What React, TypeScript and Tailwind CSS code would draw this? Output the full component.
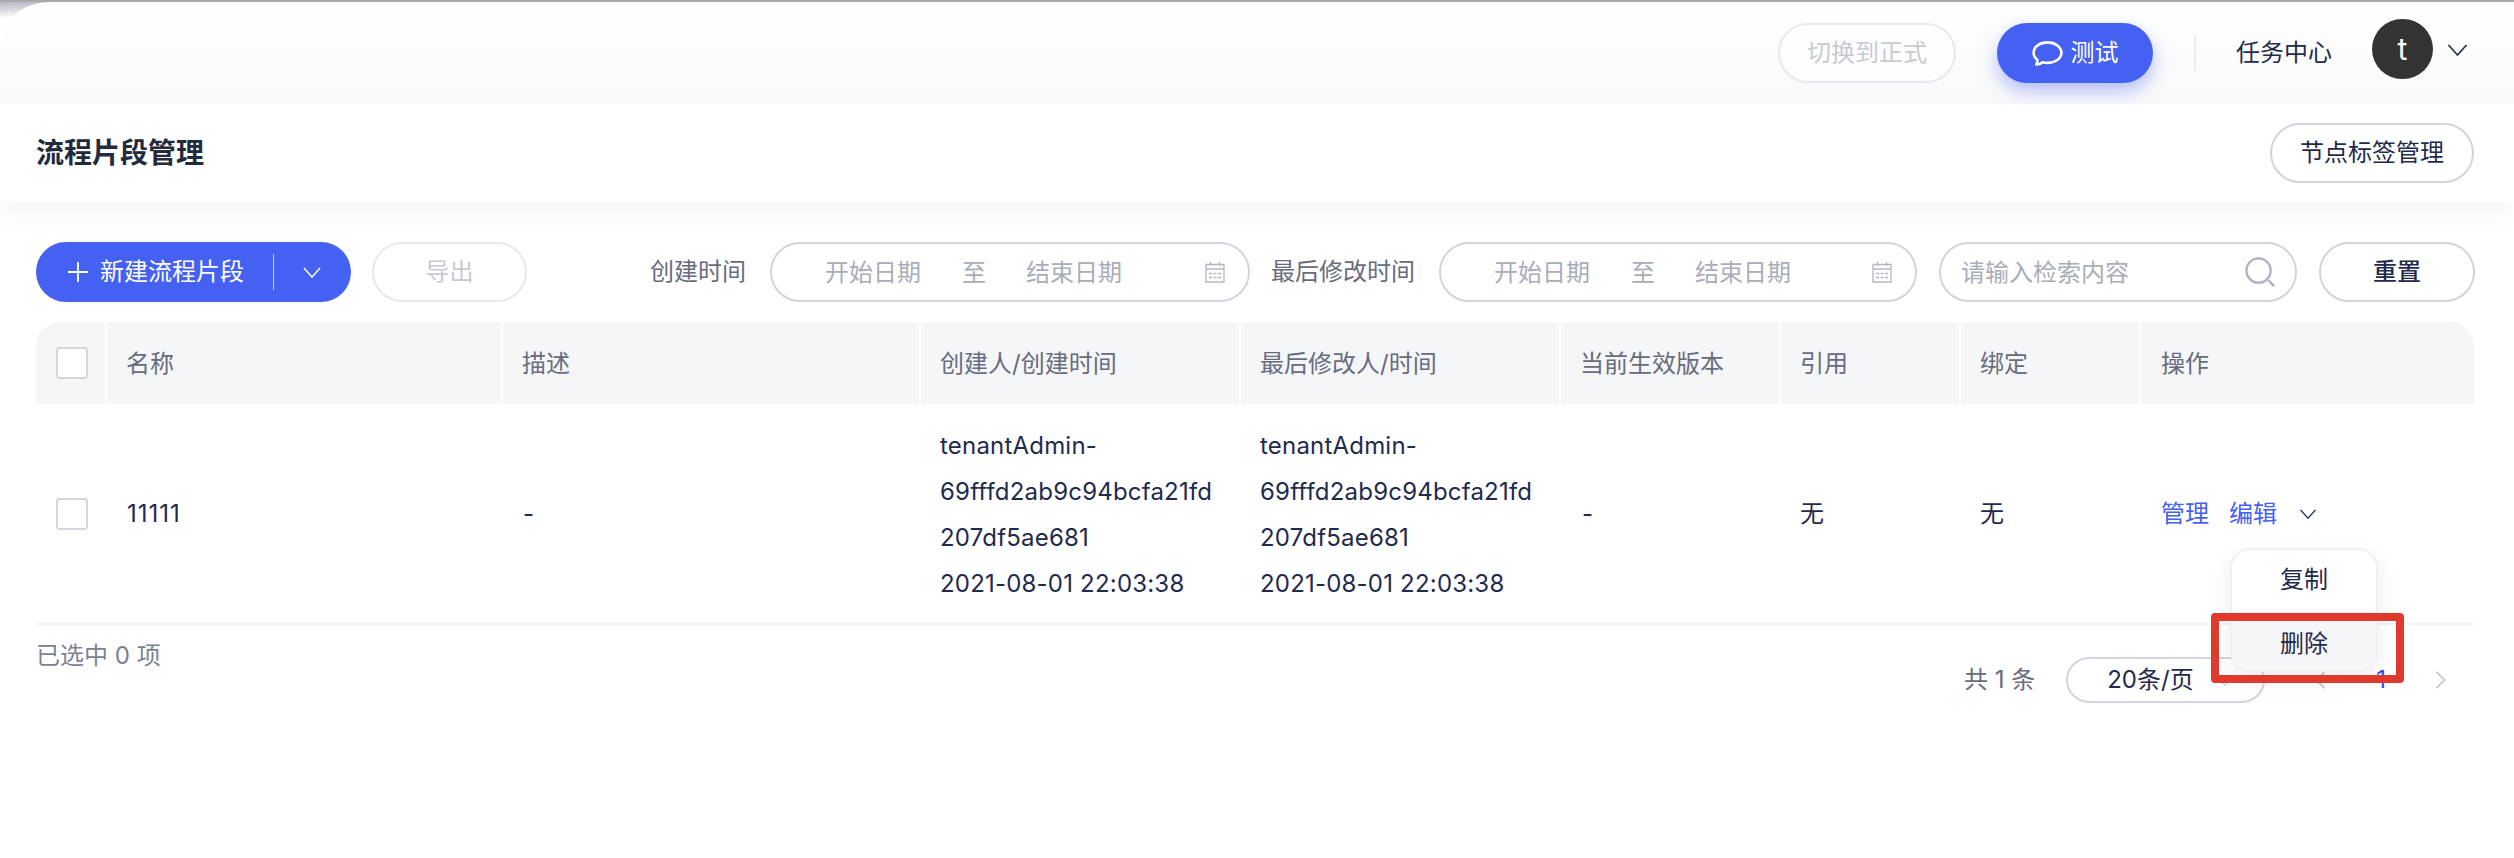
import React from 'react';

const font = 'font-["Inter","Noto_Sans_CJK_SC",sans-serif]';

function Chevron({ className }: { className?: string }) {
  return (
    <svg viewBox="0 0 20 12" fill="none" stroke="currentColor" strokeWidth="1.6" className={className}>
      <path d="M1 1l9 10 9-10" />
    </svg>
  );
}

function CalendarIcon() {
  return (
    <svg viewBox="0 0 20 22" fill="none" stroke="#b4b7c3" strokeWidth="1.3" className="ml-auto w-[20px] h-[22px] shrink-0">
      <path d="M1 3.5h18v17.5H1zM1 8h18M5.5 1v4M14.5 1v4" />
      <path d="M4 12.5h3M8.5 12.5h3M13 12.5h3M4 16.5h3M8.5 16.5h3M13 16.5h3" />
    </svg>
  );
}

function DateRange({ className }: { className: string }) {
  return (
    <div className={`${className} h-[60px] flex items-center shrink-0 rounded-full border-2 border-[#d3d4dc] pl-[53px] pr-[23px] text-[#a9adba]`}>
      <span className="pt-[2px]">开始日期</span>
      <span className="ml-[41px] pt-[2px]">至</span>
      <span className="ml-[40px] pt-[2px]">结束日期</span>
      <CalendarIcon />
    </div>
  );
}

const columns = [
  { title: '', className: 'w-[69px] pl-[20px]' },
  { title: '名称', className: 'w-[396px] pl-[19px] pt-[2px] border-l-2' },
  { title: '描述', className: 'w-[418px] pl-[19px] pt-[2px] border-l-2' },
  { title: '创建人/创建时间', className: 'w-[320px] pl-[19px] pt-[2px] border-l-2' },
  { title: '最后修改人/时间', className: 'w-[320px] pl-[19px] pt-[2px] border-l-2' },
  { title: '当前生效版本', className: 'w-[220px] pl-[19px] pt-[2px] border-l-2' },
  { title: '引用', className: 'w-[180px] pl-[19px] pt-[2px] border-l-2' },
  { title: '绑定', className: 'w-[180px] pl-[19px] pt-[2px] border-l-2' },
  { title: '操作', className: 'flex-1 pl-[20px] pt-[2px] border-l-2' },
];

function PersonCell({ className }: { className: string }) {
  return (
    <div className={`${className} pl-[21px] pt-[2px] leading-[46px] tracking-[0.2px]`}>
      <div>tenantAdmin-</div>
      <div>69fffd2ab9c94bcfa21fd</div>
      <div>207df5ae681</div>
      <div>2021-08-01 22:03:38</div>
    </div>
  );
}

function Checkbox() {
  return <div className="w-[32px] h-[32px] rounded-[4px] border-2 border-[#d5d6dd] bg-white" />;
}

export default function App() {
  return (
    <div className={`${font} min-h-[858px] bg-white text-[24px] text-[#1f2a4d]`}>
      {/* top bar */}
      <div className="h-[2px] bg-[#a9a9a9]" />
      <div className="bg-gradient-to-br from-[#b4b7c2] via-white via-[8%] to-white">
        <div className="h-[102px] rounded-tl-[50px_44px] bg-gradient-to-b from-white to-[#f9f9fa] flex items-center pr-[46px] justify-end">
          <button className="w-[178px] h-[60px] rounded-full border-2 border-[#e8e9ee] bg-white/60 text-[#c8cad3]">切换到正式</button>
          <button className="ml-[41px] w-[156px] h-[60px] rounded-full bg-[#4461f2] text-white flex items-center justify-center gap-[8px] shadow-[0_8px_18px_rgba(68,97,242,0.4)]">
            <svg viewBox="0 0 31 25" fill="none" stroke="currentColor" strokeWidth="2.6" strokeLinejoin="round" className="w-[31px] h-[25px]">
              <path d="M15.5 1.4C7.7 1.4 1.6 5.8 1.6 11.8c0 3 1.5 5.4 3.9 7.2.2 1.5-.5 3.1-1.2 4.5 2.4 0 4.6-.8 6.2-2.2 1.5.4 3.2.6 5 .6 7.8 0 13.9-4.3 13.9-10.1S23.3 1.4 15.5 1.4z" />
            </svg>
            测试
          </button>
          <div className="ml-[41px] w-[2px] h-[36px] bg-[#ebecf0]" />
          <span className="ml-[40px]">任务中心</span>
          <div className="ml-[40px] w-[61px] h-[60px] -mt-[8px] rounded-full bg-[#333333] text-white flex items-center justify-center text-[30px]">t</div>
          <Chevron className="ml-[14px] w-[21px] h-[12px] -mt-[6px]" />
        </div>
      </div>

      {/* title */}
      <div className="relative h-[98px] bg-white flex items-center justify-between pl-[36px] pr-[40px] shadow-[0_14px_24px_rgba(30,35,60,0.035)]">
        <h1 className="text-[28px] font-semibold text-[#232a3c]">流程片段管理</h1>
        <button className="w-[204px] h-[60px] rounded-full border-2 border-[#d3d4dc]">节点标签管理</button>
      </div>

      {/* toolbar */}
      <div className="pt-[40px] pl-[36px] pr-[40px] flex items-center h-[100px]">
        <div className="w-[315px] h-[60px] shrink-0 rounded-full bg-[#4461f2] text-white flex items-center pl-[32px]">
          <svg viewBox="0 0 20 20" stroke="currentColor" strokeWidth="1.8" className="w-[20px] h-[20px] mr-[12px]">
            <path d="M10 0v20M0 10h20" />
          </svg>
          新建流程片段
          <div className="ml-[29px] w-[1px] h-[36px] bg-white/70" />
          <Chevron className="ml-[29px] w-[18px] h-[11px]" />
        </div>
        <button className="ml-[21px] w-[155px] h-[60px] shrink-0 rounded-full border-2 border-[#e8e9ee] text-[#c8cad3]">导出</button>
        <span className="ml-[123px] whitespace-nowrap text-[#676c80]">创建时间</span>
        <DateRange className="ml-[24px] w-[480px]" />
        <span className="ml-[21px] whitespace-nowrap text-[#676c80]">最后修改时间</span>
        <DateRange className="ml-[24px] w-[478px]" />
        <div className="ml-[22px] w-[358px] h-[60px] shrink-0 rounded-full border-2 border-[#d3d4dc] flex items-center pl-[20px] pr-[19px] text-[#a9adba]">
          <span className="pt-[2px]">请输入检索内容</span>
          <svg viewBox="0 0 32 32" fill="none" stroke="#adb1bf" strokeWidth="2.4" className="ml-auto w-[31px] h-[31px]">
            <circle cx="14" cy="14" r="12.5" />
            <path d="M24 24l6 6" />
          </svg>
        </div>
        <button className="ml-[22px] w-[156px] h-[60px] shrink-0 rounded-full border-2 border-[#d3d4dc] font-medium">重置</button>
      </div>

      {/* table */}
      <div className="mt-[20px] ml-[36px] mr-[40px]">
        <div className="flex h-[82px] rounded-t-[24px] bg-[#f5f6f8] text-[#676c80] overflow-hidden">
          {columns.map((col, i) => (
            <div key={i} className={`${col.className} flex items-center border-white`}>
              {i === 0 ? <Checkbox /> : col.title}
            </div>
          ))}
        </div>
        <div className="relative flex items-center h-[221px] border-b-2 border-[#f0f1f3]">
          <div className="w-[69px] pl-[20px]"><Checkbox /></div>
          <div className="w-[396px] pl-[22px] tracking-[1px]">11111</div>
          <div className="w-[418px] pl-[22px]">-</div>
          <PersonCell className="w-[320px]" />
          <PersonCell className="w-[320px]" />
          <div className="w-[220px] pl-[23px]">-</div>
          <div className="w-[180px] pl-[21px]">无</div>
          <div className="w-[180px] pl-[21px]">无</div>
          <div className="flex-1 flex items-center pl-[22px] text-[#4461f2]">
            <span>管理</span>
            <span className="ml-[20px]">编辑</span>
            <Chevron className="ml-[22px] w-[18px] h-[10px] text-[#1f2a4d]" />
          </div>
        </div>

        <div className="relative flex justify-between items-start">
          <span className="mt-[15px] leading-[32px] text-[#7b8194]">已选中 0 项</span>
          <div className="mt-[32px] flex items-center h-[46px] text-[#676c80]">
            <span>共 1 条</span>
            <div className="ml-[31px] w-[199px] h-[46px] rounded-full border-2 border-[#d3d4dc] flex items-center pl-[39px] text-[#1f2a4d]">
              20条/页
              <Chevron className="ml-[25px] mt-[4px] w-[12px] h-[7px] text-[#b4b7c3]" />
            </div>
            <svg viewBox="0 0 12 20" fill="none" stroke="#c5c8d0" strokeWidth="2" className="ml-[49px] w-[12px] h-[18px]">
              <path d="M11 1L2 10l9 9" />
            </svg>
            <span className="ml-[50px] text-[#2a50ec]">1</span>
            <svg viewBox="0 0 12 20" fill="none" stroke="#c5c8d0" strokeWidth="2" className="ml-[49px] mr-[27px] w-[12px] h-[18px]">
              <path d="M1 1l9 9-9 9" />
            </svg>
          </div>

          {/* row actions menu */}
          <div className="absolute right-[96px] -top-[77px] w-[148px] h-[124px] rounded-[20px] border-2 border-[#eef0f6] bg-white shadow-[0_8px_24px_rgba(30,35,60,0.08)] overflow-hidden flex flex-col">
            <div className="h-[62px] pb-[3px] flex items-center justify-center">复制</div>
            <div className="flex-1 pt-[6px] flex items-center justify-center bg-[#f5f6f8]">删除</div>
          </div>
          {/* annotation */}
          <div className="absolute right-[70px] -top-[12px] w-[193px] h-[70px] rounded-[4px] border-[8px] border-[#e03a2e]" />
        </div>
      </div>
    </div>
  );
}
